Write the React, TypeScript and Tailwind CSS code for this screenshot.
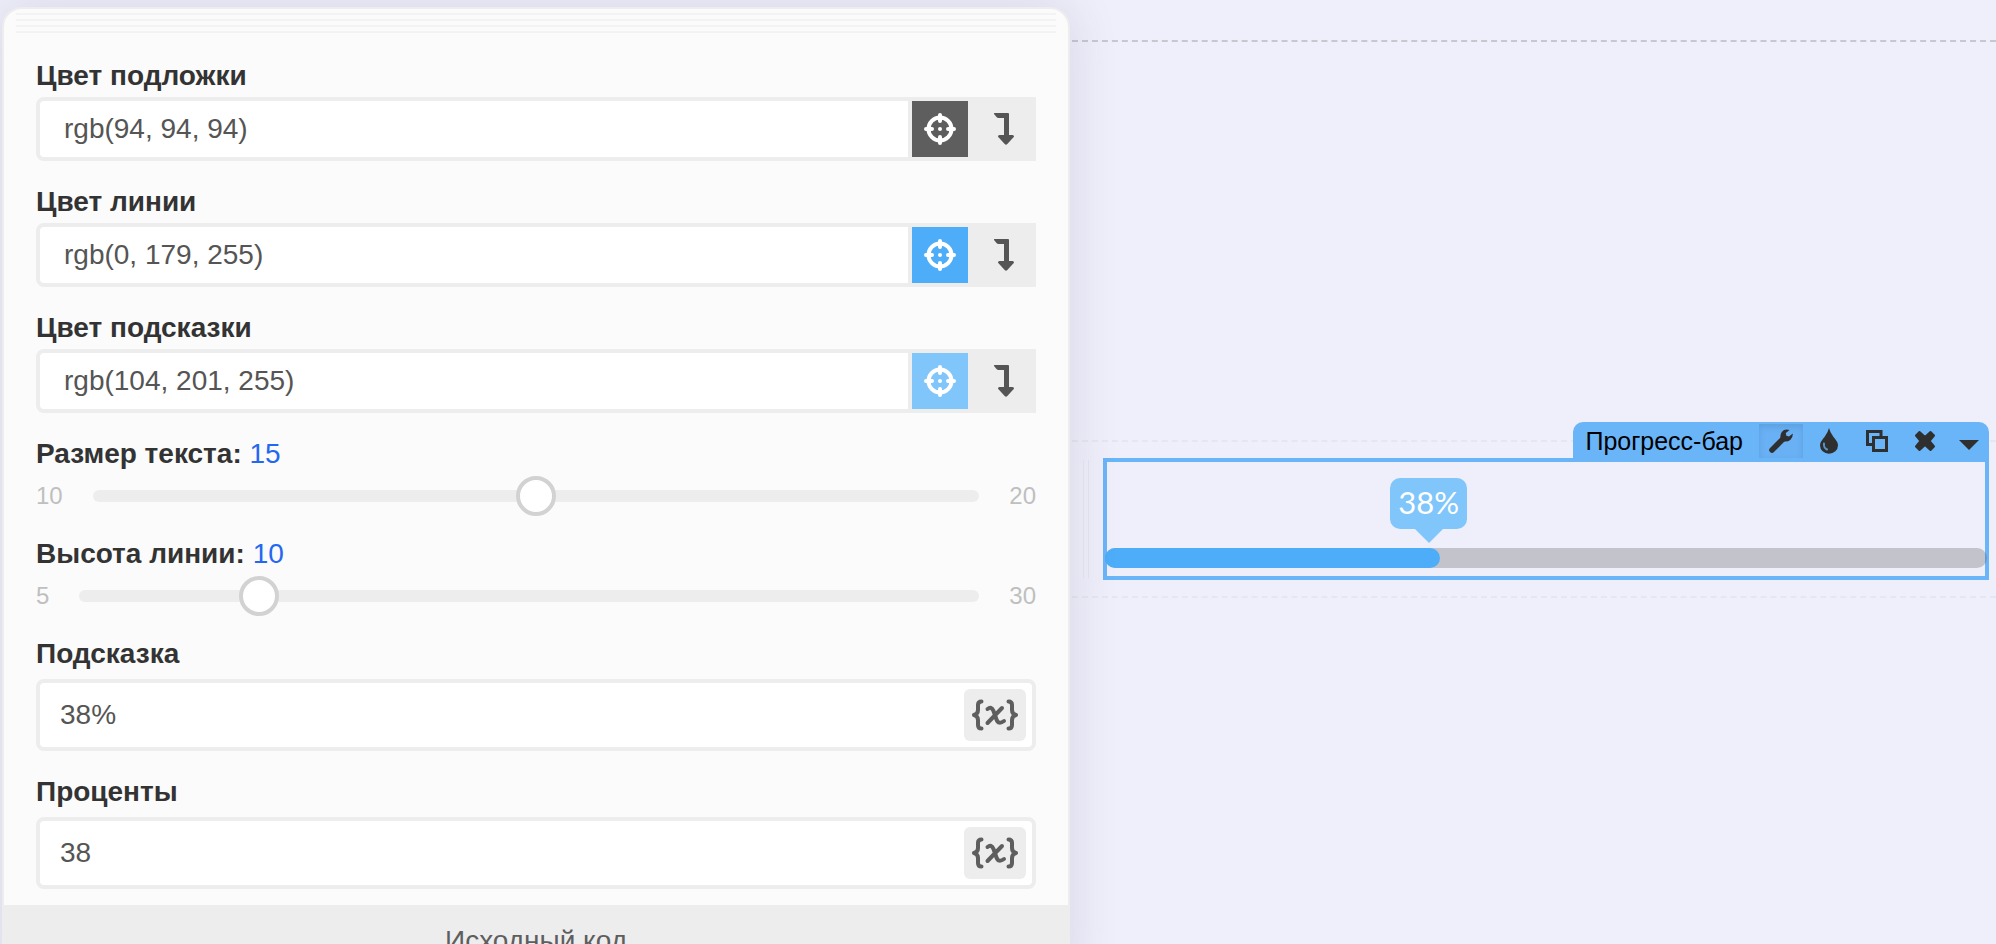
import React, { useState } from 'react';

const CrosshairIcon: React.FC = () => (
    <svg width="32" height="32" viewBox="0 0 32 32" fill="none" stroke="currentColor" strokeWidth="4" aria-hidden="true">
        <circle cx="16" cy="16" r="11.5" />
        <path d="M16 2v6M16 24v6M2 16h6M24 16h6" strokeLinecap="round" />
        <circle cx="16" cy="16" r="2" fill="currentColor" stroke="none" />
    </svg>
);

const ArrowDownIcon: React.FC = () => (
    <svg width="20" height="32" viewBox="0 0 20 32" fill="currentColor" aria-hidden="true">
        <path d="M0.5 0H14Q15 0 15 1V22H18.5Q21 22.5 19.3 24.5L13.3 31Q12 32.4 10.7 31L4.7 24.5Q3 22.5 5.500 22H10V5H4.500Q3.300 5 2.500 4L0.200 1.200Q-0.500 0 0.500 0Z" />
    </svg>
);

const VariableIcon: React.FC = () => (
    <svg width="46" height="32" viewBox="0 0 46 32" fill="none" stroke="currentColor" strokeWidth="4" strokeLinecap="round" strokeLinejoin="round" aria-hidden="true">
        <path d="M9.5 2.5Q6 2.5 6 6V11Q6 15 2 16Q6 17 6 21V26Q6 29.5 9.5 29.5" />
        <path d="M36.5 2.5Q40 2.5 40 6V11Q40 15 44 16Q40 17 40 21V26Q40 29.5 36.5 29.5" />
        <path d="M15.5 24L30 9M15.5 10Q19.5 7 21.5 12L24.5 20.5Q26.5 26 32 22" />
    </svg>
);

const WrenchIcon: React.FC = () => (
    <svg width="24" height="24" viewBox="0 0 24 24" aria-hidden="true">
        <path d="M3 21L14 10" fill="none" stroke="currentColor" strokeWidth="5.5" strokeLinecap="round" />
        <path d="M20.5 1Q15.500-0.500 12.800 3Q11 5.500 11.500 9L15 12.500Q19 13 21.500 10.700Q24 8.500 23.800 4.500L20 7.500L17.300 6.700L16.800 4Z" fill="currentColor" />
    </svg>
);

const DropIcon: React.FC = () => (
    <svg width="20" height="26" viewBox="0 0 20 26" aria-hidden="true">
        <path d="M10 0Q10.800 4 14.500 9Q19 14 19 17.300A9 8.500 0 0 1 1 17.300Q1 14 5.500 9Q9.200 4 10 0Z" fill="currentColor" />
        <path d="M5 15.500Q4.300 19.500 8 21.500" fill="none" stroke="#5b93c4" strokeWidth="2" strokeLinecap="round" />
    </svg>
);

const CopyIcon: React.FC = () => (
    <svg width="22" height="22" viewBox="0 0 22 22" fill="none" stroke="currentColor" strokeWidth="3" aria-hidden="true">
        <path d="M7 14.500H1.500V1.500H15V7" />
        <rect x="7.500" y="7.500" width="13" height="13" />
    </svg>
);

const CrossIcon: React.FC = () => (
    <svg width="22" height="22" viewBox="0 0 22 22" fill="currentColor" stroke="currentColor" strokeWidth="2" strokeLinejoin="round" aria-hidden="true">
        <path d="M5.500 2L11 7L16.500 2L20 5.500L15.500 11L20 16.500L16.500 20L11 15L5.500 20L2 16.500L6.500 11L2 5.500Z" />
    </svg>
);

const CaretIcon: React.FC = () => (
    <svg width="20" height="10" viewBox="0 0 20 10" fill="currentColor" aria-hidden="true">
        <path d="M0 0H20L10 10Z" />
    </svg>
);

const labelClass = 'block text-[28px] leading-[34px] font-bold text-[#333]';

interface ColorFieldProps {
    id: string;
    label: string;
    initial: string;
    swatchClass: string;
}

const ColorField: React.FC<ColorFieldProps> = ({ id, label, initial, swatchClass }) => {
    const [value, setValue] = useState<string>(initial);

    return (
        <div className="mb-6">
            <label htmlFor={id} className={`${labelClass} mb-1`}>{label}</label>
            <div className="flex h-16 rounded-l-lg border-4 border-[#ededed] bg-[#ededed]">
                <input
                    id={id}
                    type="text"
                    value={value}
                    onChange={e => setValue(e.target.value)}
                    className="mr-1 min-w-0 flex-1 rounded-l bg-white px-6 text-[28px] text-[#555] outline-none"
                />
                <button type="button" aria-label="Выбрать цвет" className={`flex w-14 items-center justify-center text-white ${swatchClass}`}>
                    <CrosshairIcon />
                </button>
                <button type="button" aria-label="Вставить цвет" className="flex w-16 items-center justify-center pl-2 text-[#555]">
                    <ArrowDownIcon />
                </button>
            </div>
        </div>
    );
};

interface RangeFieldProps {
    id: string;
    label: string;
    min: number;
    max: number;
    initial: number;
}

const RangeField: React.FC<RangeFieldProps> = ({ id, label, min, max, initial }) => {
    const [value, setValue] = useState<number>(initial);

    return (
        <div className="mb-5">
            <label htmlFor={id} className={`${labelClass} mb-1`}>
                {label}: <span className="font-normal text-[#2468f2]">{value}</span>
            </label>
            <div className="flex h-[42px] items-center gap-[30px] text-2xl text-[#bfbfbf]">
                <span>{min}</span>
                <div className="grid flex-1 items-center">
                    <div className="col-start-1 row-start-1 h-3 rounded-full bg-[#ededed]" />
                    {/* wider than the bar by half a thumb on each side */}
                    <input
                        id={id}
                        type="range"
                        min={min}
                        max={max}
                        value={value}
                        onChange={e => setValue(Number(e.target.value))}
                        className="col-start-1 row-start-1 -mx-5 h-10 w-[calc(100%+40px)] appearance-none bg-transparent outline-none [&::-webkit-slider-thumb]:h-10 [&::-webkit-slider-thumb]:w-10 [&::-webkit-slider-thumb]:appearance-none [&::-webkit-slider-thumb]:rounded-full [&::-webkit-slider-thumb]:border-4 [&::-webkit-slider-thumb]:border-solid [&::-webkit-slider-thumb]:border-[#d2d2d2] [&::-webkit-slider-thumb]:bg-white"
                    />
                </div>
                <span>{max}</span>
            </div>
        </div>
    );
};

interface TextFieldProps {
    id: string;
    label: string;
    value: string;
    onChange: (value: string) => void;
}

const TextField: React.FC<TextFieldProps> = ({ id, label, value, onChange }) => (
    <div className="mb-6 last:mb-0">
        <label htmlFor={id} className={`${labelClass} mb-2`}>{label}</label>
        <div className="flex h-[72px] items-center rounded-lg border-4 border-[#ededed] bg-white pr-[6px]">
            <input
                id={id}
                type="text"
                value={value}
                onChange={e => onChange(e.target.value)}
                className="h-full min-w-0 flex-1 bg-transparent px-5 text-[28px] text-[#555] outline-none"
            />
            <button type="button" aria-label="Переменная" className="flex h-[52px] w-[62px] items-center justify-center rounded-md bg-[#ededed] text-[#5e5e5e]">
                <VariableIcon />
            </button>
        </div>
    </div>
);

const App: React.FC = () => {
    const [hint, setHint] = useState<string>('38%');
    const [percent, setPercent] = useState<string>('38');

    const toolClass = 'flex h-[34px] items-center justify-center';

    return (
        <div className="grid h-screen grid-cols-[1068fr_926fr] overflow-hidden bg-[#efeffb] pl-[2px] font-['Liberation_Sans',Arial,sans-serif]">
            <aside className="z-10 mt-[7px] h-fit rounded-t-[20px] border-2 border-[#ededed] bg-[#fbfbfb] shadow-[0_0_50px_rgba(60,60,90,0.14)]">
                <div className="mx-3 mt-1 h-5 bg-[repeating-linear-gradient(180deg,#f3f3f3_0_2px,transparent_2px_6px)]" />
                <form className="px-8 pt-[26px] pb-4" onSubmit={e => e.preventDefault()}>
                    <ColorField id="back-color" label="Цвет подложки" initial="rgb(94, 94, 94)" swatchClass="bg-[#5e5e5e]" />
                    <ColorField id="line-color" label="Цвет линии" initial="rgb(0, 179, 255)" swatchClass="bg-[#4dadf9]" />
                    <ColorField id="hint-color" label="Цвет подсказки" initial="rgb(104, 201, 255)" swatchClass="bg-[#80c6fa]" />
                    <RangeField id="text-size" label="Размер текста" min={10} max={20} initial={15} />
                    <RangeField id="line-height" label="Высота линии" min={5} max={30} initial={10} />
                    <TextField id="hint" label="Подсказка" value={hint} onChange={setHint} />
                    <TextField id="percent" label="Проценты" value={percent} onChange={setPercent} />
                </form>
                <button type="button" className="h-[72px] w-full bg-[#ededed] text-[28px] text-[#5e5e5e]">
                    Исходный код
                </button>
            </aside>

            <main className="pt-10 pl-[2px]">
                <section className="h-[400px] border-t-2 border-dashed border-[#c8c7d0]" />
                <section className="flex gap-[14px] border-y-2 border-dashed border-[#e6e5f0] py-4 pr-[7px] pl-[11px]">
                    <div className="my-[2px] w-[6px] border-x border-solid border-[#e6e5f0]" />
                    <div className="relative flex-1 border-4 border-solid border-[#6ab4f8] pt-4 pb-2">
                        <div className="absolute -right-1 bottom-full mb-1 flex h-9 items-end rounded-t-[10px] bg-[#6ab4f8] pl-3 text-[#2f2f2f]">
                            <span className="mr-4 text-[25px] leading-[34px] text-black">Прогресс-бар</span>
                            <button type="button" aria-label="Настройки" className={`${toolClass} w-11 bg-[#69b1f4] shadow-[inset_0_3px_6px_rgba(40,90,140,0.2)]`}>
                                <WrenchIcon />
                            </button>
                            <button type="button" aria-label="Стиль" className={`${toolClass} ml-1 w-11`}>
                                <DropIcon />
                            </button>
                            <button type="button" aria-label="Копировать" className={`${toolClass} ml-1 w-11`}>
                                <CopyIcon />
                            </button>
                            <button type="button" aria-label="Удалить" className={`${toolClass} ml-1 w-11`}>
                                <CrossIcon />
                            </button>
                            <button type="button" aria-label="Ещё" className={`${toolClass} ml-[2px] w-10 pt-2`}>
                                <CaretIcon />
                            </button>
                        </div>

                        <div className="relative -mx-[2px]">
                            <div className="flex justify-end" style={{ width: `${Number(percent) || 0}%` }}>
                                <div className="-mr-[27px] mb-[5px] flex flex-col items-center">
                                    <span className="h-[51px] min-w-[77px] rounded-[10px] bg-[#80c6fa] px-2 text-center font-[Lato,sans-serif] text-[31px] leading-[48px] text-white">{hint}</span>
                                    <svg width="28" height="14" viewBox="0 0 28 14" fill="#80c6fa" aria-hidden="true">
                                        <path d="M0 0H28L14 14Z" />
                                    </svg>
                                </div>
                            </div>
                            <div className="h-5 rounded-full bg-[rgba(94,94,94,0.3)]">
                                <div className="h-5 rounded-full bg-[#4dadf9]" style={{ width: `${Number(percent) || 0}%` }} />
                            </div>
                        </div>
                    </div>
                </section>
            </main>
        </div>
    );
};

export default App;
